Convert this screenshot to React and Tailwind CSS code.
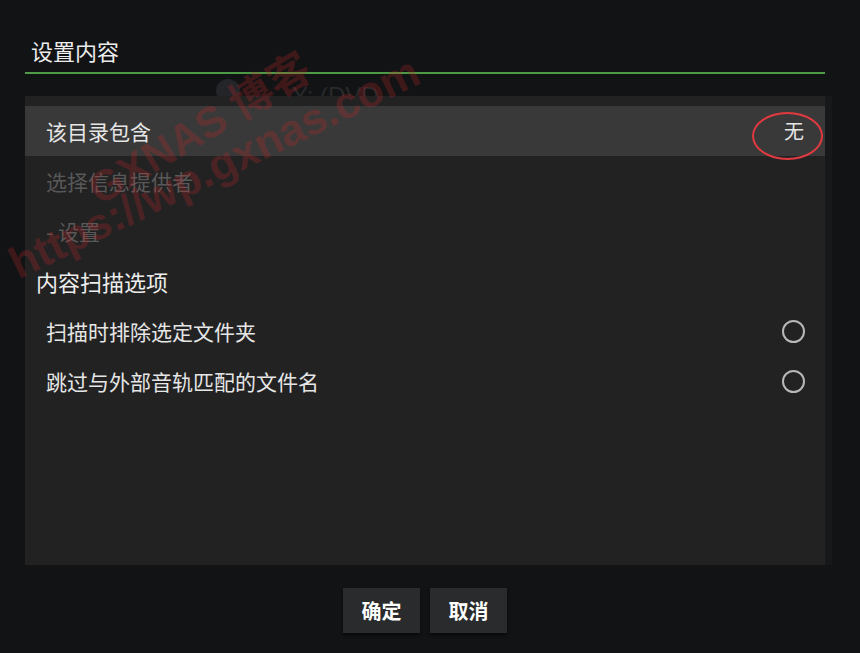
import React from "react";

const font = { fontFamily: '"Noto Sans CJK SC", "Noto Sans", sans-serif' };

const Radio = () => (
    <span className="w-[23px] h-[23px] rounded-full border-2 border-[#b8b8b8] block" />
);

const Row = ({ label, right, active, disabled }) => (
    <div
        className={`h-[50px] flex items-center justify-between pl-[21px] pr-[20px] ${
            active ? "bg-[#393939]" : ""
        }`}
    >
        <span
            className={`text-[21px] leading-none ${
                disabled ? "text-[#585858]" : "text-[#e6e6e6]"
            }`}
        >
            {label}
        </span>
        {right}
    </div>
);

const App = () => {
    const content = (
        <div
            className="relative w-[860px] h-[653px] bg-[#121315] overflow-hidden"
            style={font}
        >
            <div className="ml-[25px] w-[800px] pt-[35px]">
                <div className="border-b-2 border-[#4e9a46] pb-[7px] pl-[6px]">
                    <span className="text-[22px] leading-[30px] text-[#ececec]">
                        设置内容
                    </span>
                </div>
            </div>

            {/* ghost text behind dialog */}
            <span className="absolute left-[216px] top-[79px] w-[24px] h-[24px] rounded-full bg-[#242528] block" />
            <span
                className="absolute left-[292px] top-[78px] text-[24px] text-[#28292b]"
                style={{ fontFamily: '"Liberation Sans", sans-serif' }}
            >
                Y: (DVD
            </span>

            <div className="flex ml-[25px] mt-[22px]">
                <div className="relative w-[800px] h-[469px] bg-[#222223] pt-[10px]">
                    <Row
                        label="该目录包含"
                        active
                        right={
                            <span className="text-[20px] leading-none text-[#e6e6e6] pr-[1px]">
                                无
                            </span>
                        }
                    />
                    <Row label="选择信息提供者" disabled />
                    <Row label="- 设置" disabled />
                    <div className="h-[50px] flex items-center pl-[11px]">
                        <span className="text-[22px] leading-none text-[#ededed]">
                            内容扫描选项
                        </span>
                    </div>
                    <Row label="扫描时排除选定文件夹" right={<Radio />} />
                    <Row label="跳过与外部音轨匹配的文件名" right={<Radio />} />

                    {/* red annotation ellipse */}
                    <div className="absolute left-[727px] top-[16px] w-[71px] h-[48px] rounded-[50%] border-2 border-[#e03a40]" />
                </div>
                <div className="w-[7px] h-[469px] bg-[#17181a]" />
            </div>

            <div className="flex justify-center gap-[10px] mt-[23px] pr-[10px]">
                <button className="w-[77px] h-[45px] bg-[#2a2b2c] text-white font-bold text-[20px] shadow-[0_2px_3px_rgba(0,0,0,0.6)]">
                    确定
                </button>
                <button className="w-[77px] h-[45px] bg-[#2a2b2c] text-white font-bold text-[20px] shadow-[0_2px_3px_rgba(0,0,0,0.6)]">
                    取消
                </button>
            </div>

            {/* watermark */}
            <div
                className="absolute left-[92px] top-[172px] text-[43px] leading-[43px] font-bold text-[#c62828]/25 whitespace-nowrap -rotate-[31deg] origin-left pointer-events-none"
                style={{ fontFamily: '"Liberation Sans", "Noto Sans CJK SC", sans-serif' }}
            >
                GXNAS 博客
            </div>
            <div
                className="absolute left-[12px] top-[244px] text-[44px] leading-[44px] font-bold text-[#c62828]/25 whitespace-nowrap -rotate-[26deg] origin-left pointer-events-none"
                style={{ fontFamily: '"Liberation Sans", sans-serif' }}
            >
                https://wp.gxnas.com
            </div>
        </div>
    );

    return content;
};

export default App;
